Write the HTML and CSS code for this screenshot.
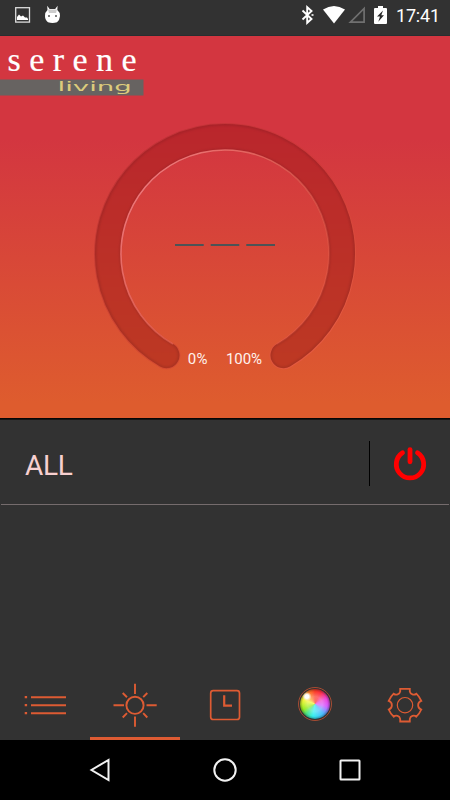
FILE: index.html
```html
<!DOCTYPE html>
<html lang="en">
<head>
<meta charset="utf-8">
<title>Serene Living</title>
<link rel="stylesheet" href="styles.css">
</head>
<body>
<div class="phone">
  <header class="status">
    <div class="notices">
      <svg width="16" height="16" viewBox="0 0 16 16"><rect x=".7" y=".7" width="13.8" height="14.4" fill="none" stroke="#ddd" stroke-width="1.3"/><path d="M2 13V10L4 7.500 6 9.500 8 8.500 10 10.500H12L13 12V13Z" fill="#fff"/></svg>
      <svg width="17" height="19" viewBox="0 0 17 19"><path d="M3.500 5 3.200.8 5.600 4H11.200L13.600.8 13.300 5Q16 7 16 11Q15.700 15 13 17.200Q8.500 18.800 4 17.200Q1 15 1 11Q1 7 3.500 5Z" fill="#fff"/><path d="M4 4.500H13L12 8H5Z" fill="#ccc"/><circle cx="5" cy="11" r="1" fill="#555"/><circle cx="12" cy="11" r="1" fill="#555"/></svg>
    </div>
    <div class="system">
      <svg class="bt" width="14" height="20" viewBox="0 0 14 20"><path d="M1.500 5.500 10.500 14 6.200 17.800V2.200L10.500 6 1.500 14.500" fill="none" stroke="#fff" stroke-width="1.900"/><path d="M10.500 9.200h2v1.600h-2z" fill="#fff"/></svg>
      <svg class="wifi" width="22" height="18" viewBox="0 0 22 18"><path d="M0 3.600Q11-3.600 22 3.600L11 17.600Z" fill="#fff"/></svg>
      <svg class="cell" width="18" height="18" viewBox="0 0 18 18"><path d="M2.400 16.200H16.100V2.500Z" fill="none" stroke="#707070" stroke-width="1.700"/></svg>
      <svg class="battery" width="13" height="18" viewBox="0 0 13 18"><path d="M4 0H9V2H12Q13 2 13 3V17Q13 18 12 18H1Q0 18 0 17V3Q0 2 1 2H4Z" fill="#fff"/><path d="M9 4.500 3 10.500H6L4.300 15.700 10 9.200H7.300Z" fill="#292929"/></svg>
      <span class="time">17:41</span>
    </div>
  </header>

  <main class="hero">
    <svg class="brand" width="150" height="62" viewBox="0 0 150 62">
      <rect y="43.500" width="143.500" height="16" fill="#676361"/>
      <text class="brand-name" x="7.500" y="35" textLength="129">serene</text>
      <text class="brand-sub" transform="translate(57.500 55) scale(2.250 1)" textLength="33" lengthAdjust="spacingAndGlyphs">living</text>
    </svg>
    <svg class="dial" width="280" height="265" viewBox="85 115 280 265">
      <defs>
        <linearGradient id="rim" x1="100" y1="150" x2="350" y2="370" gradientUnits="userSpaceOnUse"><stop offset="0" stop-color="#a72a2d" stop-opacity=".5"/><stop offset=".55" stop-color="#cb3c34" stop-opacity=".4"/><stop offset="1" stop-color="#f2694c"/></linearGradient>
        <linearGradient id="shine" x1="145" y1="180" x2="315" y2="330" gradientUnits="userSpaceOnUse"><stop offset="0" stop-color="#ee777a"/><stop offset=".35" stop-color="#ef7167" stop-opacity=".7"/><stop offset="1" stop-color="#ee6550" stop-opacity=".15"/></linearGradient>
        <linearGradient id="track" x1="0" y1="123" x2="0" y2="370" gradientUnits="userSpaceOnUse"><stop offset="0" stop-color="#ba262d"/><stop offset="1" stop-color="#bd3923"/></linearGradient>
        <linearGradient id="edge" x1="0" y1="123" x2="0" y2="370" gradientUnits="userSpaceOnUse"><stop offset="0" stop-color="#a82229"/><stop offset="1" stop-color="#aa3321"/></linearGradient>
        <filter id="soft" x="-10%" y="-10%" width="120%" height="120%" color-interpolation-filters="sRGB"><feGaussianBlur stdDeviation="1.300"/></filter>
      </defs>
      <path d="M166.500 355.300A117 117 0 1 1 283.500 355.300" fill="none" stroke="url(#rim)" stroke-width="28" stroke-linecap="round"/>
      <path d="M166.500 355.300A117 117 0 1 1 283.500 355.300" fill="none" stroke="url(#edge)" stroke-width="26" stroke-linecap="round"/>
      <path d="M166.500 355.300A117 117 0 1 1 283.500 355.300" fill="none" stroke="url(#track)" stroke-width="22.500" stroke-linecap="round" filter="url(#soft)"/>
      <path d="M173 344A104 104 0 1 1 277 344" fill="none" stroke="url(#shine)" stroke-width="1.600"/>
      <path d="M175 245H203.700M210.700 245H239.300M246.300 245H275" stroke="#4c5356" stroke-width="2.200"/>
      <text class="range" x="187.800" y="364.300" textLength="19.600">0%</text>
      <text class="range" x="226" y="364.300" textLength="36">100%</text>
    </svg>
  </main>

  <section class="group">
    <span class="group-name">ALL</span>
    <div class="power">
      <svg width="34" height="34" viewBox="0 0 34 34"><path d="M9.500 5.800A13.700 13.700 0 1 0 24.500 5.800" fill="none" stroke="#f00" stroke-width="4.800" stroke-linecap="round"/><path d="M17 2.600V14.800" stroke="#f00" stroke-width="4.800" stroke-linecap="round"/></svg>
    </div>
  </section>

  <nav class="tabs">
    <div class="tab"><svg width="50" height="50" viewBox="0 0 50 50"><path d="M11 17.200H46M11 25.200H46M11 33.200H46" stroke="#dd5b33" stroke-width="1.900"/><path d="M4.700 17.200h2.400M4.700 25.200h2.400M4.700 33.200h2.400" stroke="#dd5b33" stroke-width="2.200"/></svg></div>
    <div class="tab active"><svg width="50" height="50" viewBox="0 0 50 50"><g fill="none" stroke="#dd5b33" stroke-width="1.900"><circle cx="25" cy="25.300" r="8.600"/><path d="M25 3.800V14M25 36.600V46.700M3.500 25.200H14M36.500 25.200H46.700M12.700 13 17 17.200M33.200 17.200 37.300 13M12.700 37.500 17 33.200M33.200 33.200 37.300 37.500"/></g></svg></div>
    <div class="tab"><svg width="50" height="50" viewBox="0 0 50 50"><rect x="10.700" y="10.700" width="28.800" height="28.800" rx="2.500" fill="none" stroke="#dd5b33" stroke-width="1.700"/><path d="M24.200 15.200V25.700H32" fill="none" stroke="#dd5b33" stroke-width="2.200"/></svg></div>
    <div class="tab"><div class="wheel"></div></div>
    <div class="tab"><svg width="50" height="50" viewBox="0 0 50 50"><g fill="none" stroke="#dd5b33"><circle cx="25" cy="25.200" r="7.700" stroke-width="1.200"/><path d="M20.200 8.900H29.800V11.500A4 4 0 0 0 36.300 13.700Q39.500 16.700 41.300 20.900A4.500 4.500 0 0 0 41.300 29.500Q39.500 33.700 36.300 36.700A4 4 0 0 0 29.800 38.900V41.500H20.200V38.900A4 4 0 0 0 13.700 36.700Q10.500 33.700 8.700 29.500A4.500 4.500 0 0 0 8.700 20.900Q10.500 16.700 13.700 13.700A4 4 0 0 0 20.200 11.500Z" stroke-width="1.800"/></g></svg></div>
  </nav>

  <footer class="system-nav">
    <svg width="24" height="24" viewBox="0 0 24 24"><path d="M20.500 1.900V22L3.500 12Z"/></svg>
    <svg width="24" height="24" viewBox="0 0 24 24"><circle cx="12" cy="12" r="10.700"/></svg>
    <svg width="24" height="24" viewBox="0 0 24 24"><rect x="2.500" y="2.500" width="19" height="19" rx=".5"/></svg>
  </footer>
</div>
</body>
</html>
```

FILE: styles.css
```css
* { box-sizing: border-box; }
body { margin: 0; font-family: Roboto, sans-serif; background: #000; }
svg { display: block; flex: none; }
.phone { width: 450px; height: 800px; display: flex; flex-direction: column; background: #323232; overflow: hidden; }

.status { height: 36px; flex: none; display: flex; justify-content: space-between; border-bottom: 1px solid #282e30; color: #fff; }
.notices { display: flex; padding: 7px 0 0 15px; gap: 13px; align-items: flex-start; }
.notices svg + svg { margin-top: -2px; }
.system { display: flex; align-items: flex-start; padding: 5px 10px 0 0; }
.bt { margin-right: 8px; }
.wifi { margin: 1px 3px 0 0; }
.cell { margin: 1px 8px 0 0; }
.battery { margin: 1px 9px 0 0; }
.time { width: 44px; font-size: 18px; line-height: 21px; white-space: nowrap; letter-spacing: -.2px; }

.hero { height: 382px; flex: none; display: flex; flex-direction: column; background: linear-gradient(#d33640 0%, #d33640 27%, #de5c2e 96%); }
.brand-name { font: 34px "Liberation Serif", serif; fill: #fff; stroke: #fff; stroke-width: .2px; }
.brand-sub { font: 12.5px "DejaVu Sans", sans-serif; fill: #dccb7c; }
.dial { margin: 17px 0 0 85px; }
.range { font: 15px Roboto, sans-serif; fill: #fff2ed; }

.group { position: relative; height: 87px; flex: none; display: flex; align-items: center; justify-content: space-between; margin: 0 1px; padding: 4px 0 0 24px; border-bottom: 1px solid #756c6d; }
.group::before { content: ""; position: absolute; inset: 0 -1px auto; height: 2px; background: linear-gradient(#000, #1b1b1b); }
.group-name { font-size: 28px; line-height: 34px; letter-spacing: -.3px; color: #f8d0d0; margin-top: 6px; }
.power { width: 80px; height: 45px; border-left: 1px solid #000; display: flex; align-items: center; justify-content: center; }
.power svg { margin-top: 1px; }

.tabs { height: 70px; margin-top: auto; flex: none; display: grid; grid-template-columns: repeat(5, 90px); }
.tab { display: flex; flex-direction: column; align-items: center; padding-top: 10px; border-bottom: 3px solid transparent; }
.tab.active { border-color: #dd5b33; }
.wheel { width: 34px; height: 34px; margin-top: 7px; border: 1px solid #a64c32; border-radius: 50%; padding: 1px; }
.wheel::before { content: ""; display: block; height: 30px; border-radius: 50%; background: radial-gradient(ellipse at 23% 25%, #fff 0 6%, transparent 14%), radial-gradient(circle, rgba(255,255,255,.28) 0 35%, transparent 58%, rgba(0,0,0,.45) 75%), conic-gradient(#fb3b28, #ff303f 25deg, #ed44d8 65deg, #d45bff 100deg, #4bb9ff 140deg, #34eef0 190deg, #49e58d 220deg, #95ec20 245deg, #f3f53a 290deg, #ff922d 325deg, #fb3b28); }

.system-nav { height: 60px; flex: none; display: flex; justify-content: center; align-items: center; gap: 101px; background: #000; }
.system-nav svg { fill: none; stroke: #f2f2f2; stroke-width: 2; }
```
